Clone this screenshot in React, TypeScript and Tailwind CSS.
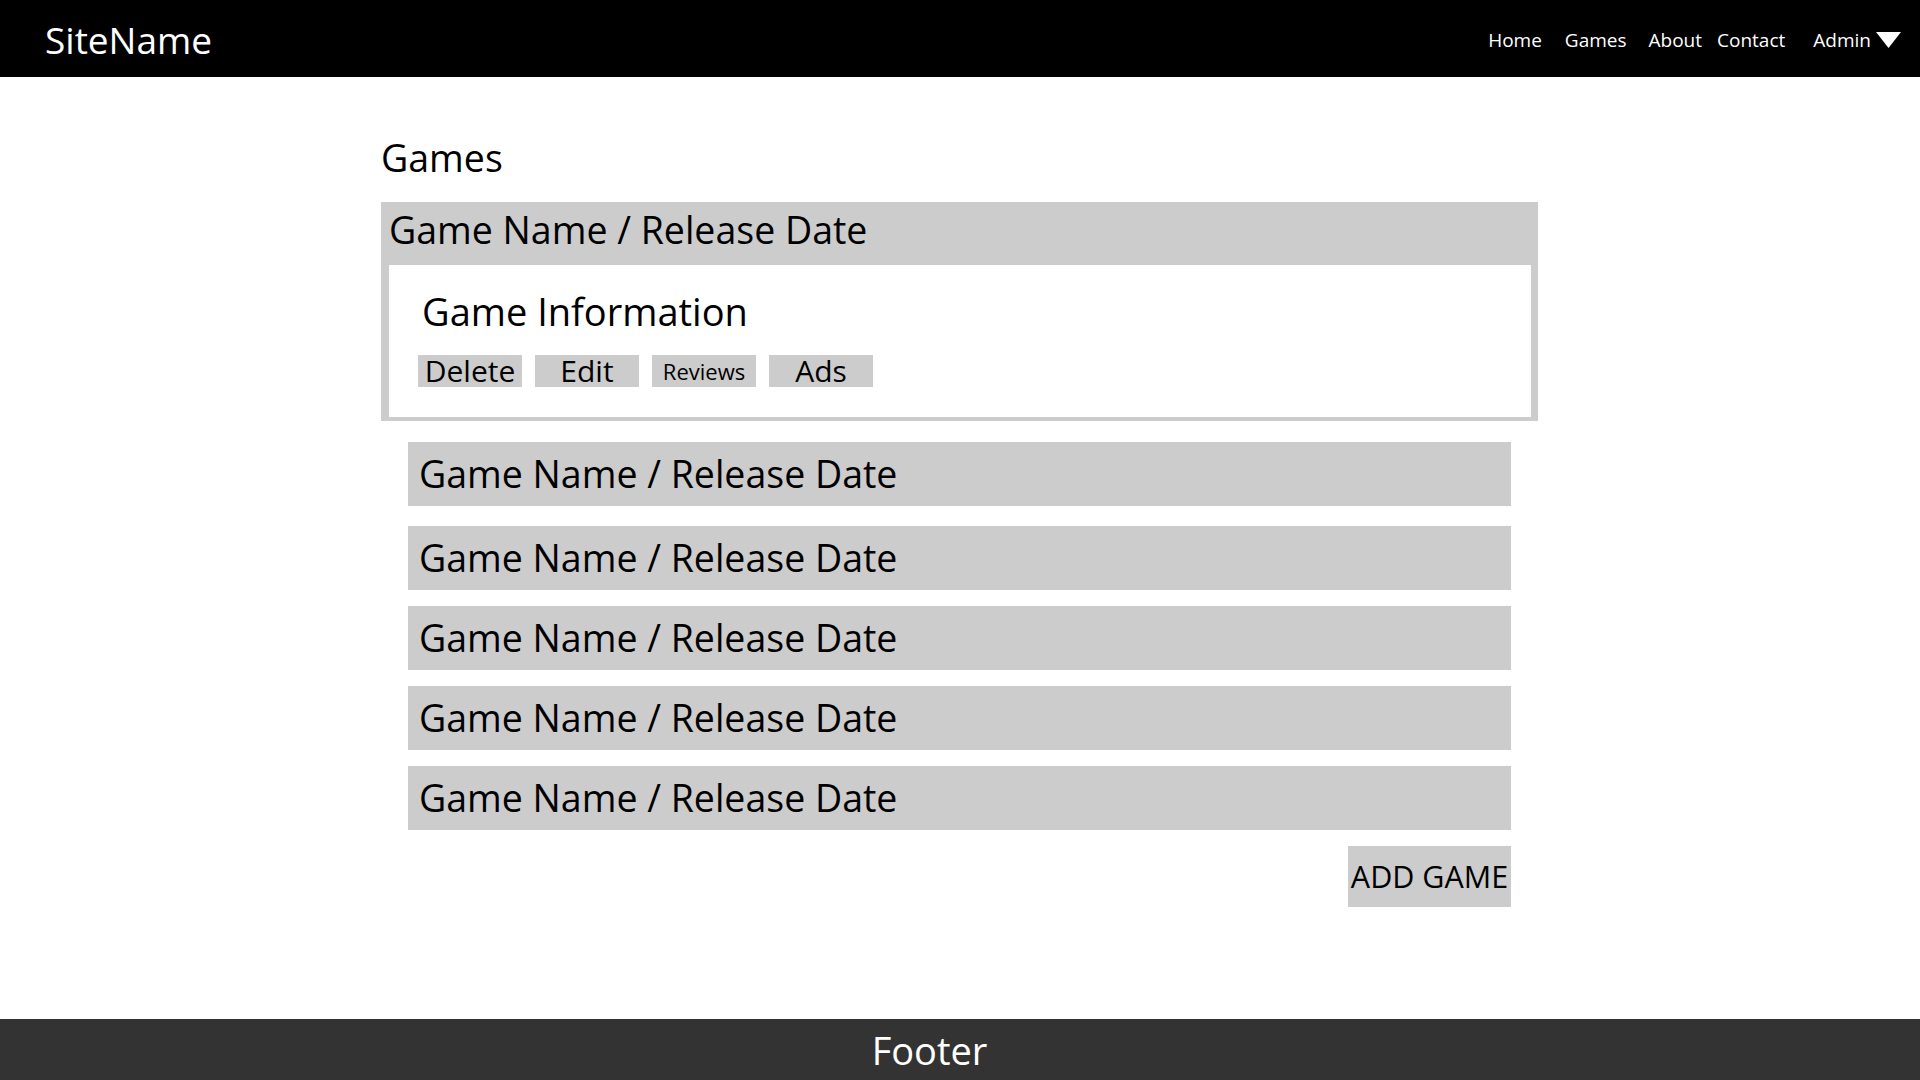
import React from "react"

const font = { fontFamily: '"Open Sans", "Noto Sans", sans-serif' }

const rows = [0, 1, 2, 3, 4]

function ActionButton({ label, small }: { label: string; small?: boolean }) {
  return (
    <button
      className={`w-[104px] h-[32px] bg-[#cccccc] flex items-center justify-center text-black leading-none ${
        small ? "text-[22px]" : "text-[30px]"
      }`}
    >
      {label}
    </button>
  )
}

export default function App() {
  return (
    <div className="min-h-screen flex flex-col bg-white text-black" style={font}>
      {/* Top bar */}
      <header className="h-[77px] shrink-0 bg-black flex items-center justify-between">
        <span className="pl-[45px] pt-[2px] text-white text-[37px] leading-none">SiteName</span>
        <nav className="flex items-center pr-[19px] pt-[4px] text-white text-[19px] leading-none">
          <a className="mr-[23px]">Home</a>
          <a className="mr-[22px]">Games</a>
          <a className="mr-[15px]">About</a>
          <a className="mr-[28px]">Contact</a>
          <a className="mr-[5px]">Admin</a>
          <svg width="25" height="16" viewBox="0 0 25 16" className="-mt-[2px]">
            <polygon points="0,0 25,0 12.5,16" fill="white" />
          </svg>
        </nav>
      </header>

      {/* Content */}
      <main className="flex-1">
        <div className="ml-[381px] w-[1157px] pt-[57px]">
          <h1 className="text-[37.5px] leading-[48px] h-[68px]">Games</h1>

          {/* Expanded game */}
          <div className="bg-[#cccccc] pl-[8px] pr-[7px] pb-[4px]">
            <div className="h-[63px] pb-[8px] flex items-center text-[37.5px] leading-none">
              Game Name / Release Date
            </div>
            <div className="h-[152px] bg-white pl-[29px] pt-[22px]">
              <h2 className="pl-[4px] text-[38px] leading-[48px]">Game Information</h2>
              <div className="mt-[20px] flex gap-[13px]">
                <ActionButton label="Delete" />
                <ActionButton label="Edit" />
                <ActionButton label="Reviews" small />
                <ActionButton label="Ads" />
              </div>
            </div>
          </div>

          {/* Collapsed games */}
          <div className="mt-[21px] ml-[27px] w-[1103px] flex flex-col gap-[16px]">
            {rows.map((i) => (
              <div
                key={i}
                className={`h-[64px] bg-[#cccccc] flex items-center pl-[11px] text-[37.5px] leading-none ${
                  i === 1 ? "mt-[4px]" : ""
                }`}
              >
                Game Name / Release Date
              </div>
            ))}
            <div className="flex justify-end">
              <button className="w-[163px] h-[61px] bg-[#cccccc] flex items-center justify-center text-[30.5px] leading-none text-black">
                ADD GAME
              </button>
            </div>
          </div>
        </div>
      </main>

      {/* Footer */}
      <footer className="h-[61px] shrink-0 bg-[#333333] flex items-center justify-center pr-[61px]">
        <span className="text-white text-[38px] leading-none">Footer</span>
      </footer>
    </div>
  )
}
